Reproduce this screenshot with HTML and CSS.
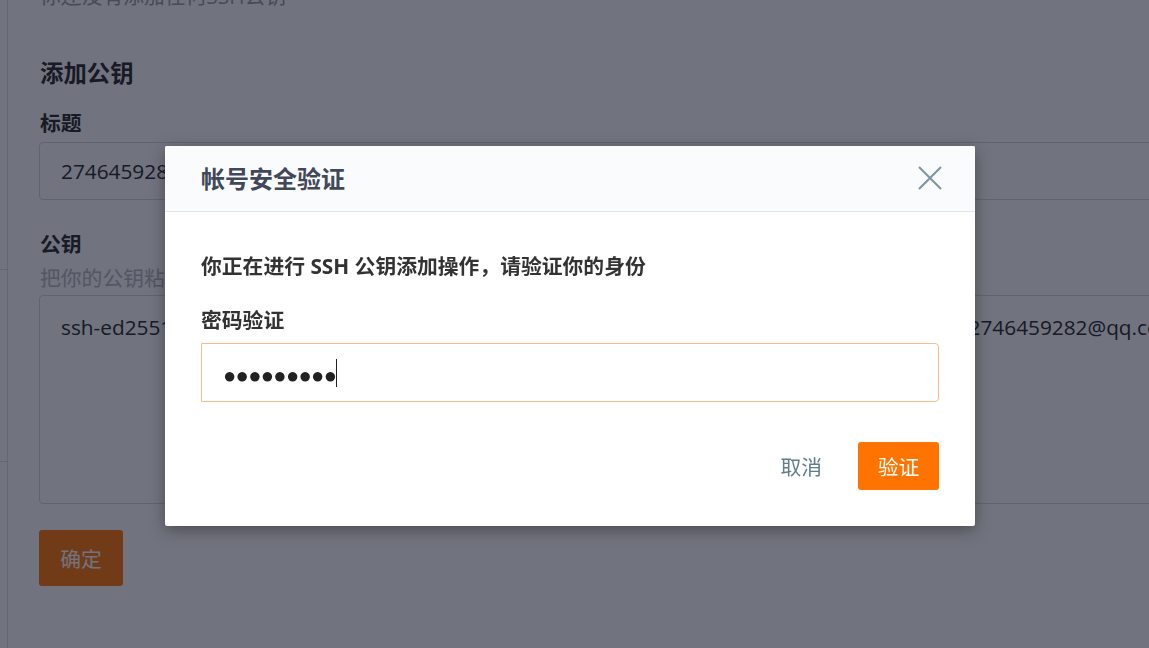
FILE: index.html
```html
<!DOCTYPE html>
<html lang="zh-CN">
<head>
<meta charset="utf-8">
<title>SSH 公钥</title>
<link rel="stylesheet" href="styles.css">
</head>
<body>
<div class="page">
  <aside class="side">
    <div class="side-item side-item-a"></div>
    <div class="side-item side-item-b"></div>
  </aside>
  <main class="main">
    <p class="intro">你还没有添加任何SSH公钥</p>
    <h2 class="section-title">添加公钥</h2>
    <div class="field-label">标题</div>
    <div class="field-input">2746459282@qq.com</div>
    <div class="field-label field-label-key">公钥</div>
    <p class="field-hint">把你的公钥粘贴到这里，公钥通常以 ssh-rsa 开头</p>
    <div class="field-textarea">ssh-ed25519 AAAAC3NzaC1lZDI1NTE5AAAAIJ7mQ0x9Yb3KkPz2vR8sLw1tN4uFhG6cE5dX0aZql 2746459282@qq.com</div>
    <button class="btn-submit" type="button">确定</button>
  </main>
</div>

<div class="mask"></div>

<div class="dialog" role="dialog">
  <div class="dialog-header">
    <h3 class="dialog-title">帐号安全验证</h3>
    <button class="dialog-close" type="button" aria-label="关闭">
      <svg width="24" height="24" viewBox="0 0 24 24"><path d="M1 1L23 23M23 1L1 23" fill="none" stroke="#7c949f" stroke-width="2"/></svg>
    </button>
  </div>
  <div class="dialog-body">
    <p class="dialog-msg">你正在进行 SSH 公钥添加操作，请验证你的身份</p>
    <div class="dialog-label">密码验证</div>
    <div class="pwd-input"><span class="pwd-dots">●●●●●●●●●</span><span class="caret"></span></div>
  </div>
  <div class="dialog-footer">
    <button class="btn-cancel" type="button">取消</button>
    <button class="btn-verify" type="button">验证</button>
  </div>
</div>
</body>
</html>
```

FILE: styles.css
```css
html, body {
  margin: 0;
  padding: 0;
  overflow: hidden;
  background: #ffffff;
}

body {
  font-family: "Open Sans", "Noto Sans CJK SC", sans-serif;
  font-size: 20.8px;
  color: #333333;
  width: 1149px;
  height: 648px;
}

.page {
  display: flex;
  width: 1400px;
  height: 648px;
}

.side {
  width: 7px;
  flex: none;
  border-right: 1px solid #dfe1e6;
}

.side-item {
  border-bottom: 1px solid #dfe1e6;
}

.side-item-a { height: 269px; }
.side-item-b { height: 191px; }

.main {
  flex: 1;
  padding-left: 31px;
}

.intro {
  margin: -19px 0 0 1px;
  line-height: 30px;
  color: #999999;
}

.section-title {
  margin: 46px 0 0 1px;
  font-size: 23.4px;
  line-height: 32px;
  font-weight: 700;
  color: #222;
}

.field-label {
  margin: 18.5px 0 0 1px;
  line-height: 30px;
  font-weight: 700;
  color: #222;
}

.field-label-key {
  margin-top: 28.5px;
}

.field-input {
  margin-top: 4.5px;
  height: 58px;
  box-sizing: border-box;
  border: 1px solid #d6d8de;
  border-radius: 4px;
  padding: 0 21px;
  line-height: 56px;
  color: #222;
}

.field-hint {
  margin: 4.5px 0 0 1px;
  line-height: 30px;
  color: #b4b6bc;
}

.field-textarea {
  margin-top: 2px;
  height: 209px;
  box-sizing: border-box;
  border: 1px solid #d6d8de;
  border-radius: 4px;
  padding: 16px 21px;
  line-height: 30px;
  white-space: nowrap;
  color: #222;
}

.btn-submit {
  margin-top: 26px;
  width: 84px;
  height: 56px;
  border: none;
  border-radius: 3px;
  background: #ff7400;
  color: #ffffff;
  font-family: inherit;
  font-size: 20.8px;
  padding: 0;
}

.mask {
  position: fixed;
  inset: 0;
  background: rgba(18, 22, 40, 0.6);
}

.dialog {
  position: fixed;
  left: 165px;
  top: 146px;
  width: 810px;
  background: #ffffff;
  border-radius: 2px;
  box-shadow: 0 4px 16px rgba(0, 0, 0, 0.35);
}

.dialog-header {
  height: 65px;
  display: flex;
  align-items: center;
  justify-content: space-between;
  padding: 0 33px 0 36px;
  background: #fafbfc;
  border-bottom: 1px solid #e1e6eb;
  border-radius: 2px 2px 0 0;
}

.dialog-title {
  margin: 0;
  font-size: 24px;
  font-weight: 700;
  color: #414859;
  line-height: 32px;
}

.dialog-close {
  display: flex;
  border: none;
  background: none;
  padding: 0;
  margin-top: -2px;
}

.dialog-body {
  padding: 39px 36px 0;
}

.dialog-msg {
  margin: 0;
  line-height: 30px;
  font-weight: 700;
  color: #333333;
}

.dialog-label {
  margin-top: 24px;
  line-height: 30px;
  font-weight: 700;
  color: #333333;
}

.pwd-input {
  margin-top: 8px;
  height: 59px;
  box-sizing: border-box;
  border: 1px solid #f6bd8e;
  border-radius: 0 4px 4px 0;
  padding: 0 20px 0 21px;
  display: flex;
  align-items: center;
}

.pwd-dots {
  font-family: "Liberation Sans", sans-serif;
  font-size: 22px;
  letter-spacing: -0.7px;
  color: #222;
  line-height: 1;
  margin-top: 7px;
}

.caret {
  display: inline-block;
  width: 1px;
  height: 28px;
  margin-left: 0;
  background: #222;
}

.dialog-footer {
  display: flex;
  justify-content: flex-end;
  gap: 16px;
  padding: 40px 36px 36px;
}

.btn-cancel,
.btn-verify {
  height: 48px;
  padding: 0 20px;
  border: none;
  border-radius: 3px;
  font-family: inherit;
  font-size: 20.8px;
}

.btn-cancel {
  background: transparent;
  color: #607d8b;
}

.btn-verify {
  width: 81px;
  padding: 0;
  background: #ff7400;
  color: #ffffff;
}
```
